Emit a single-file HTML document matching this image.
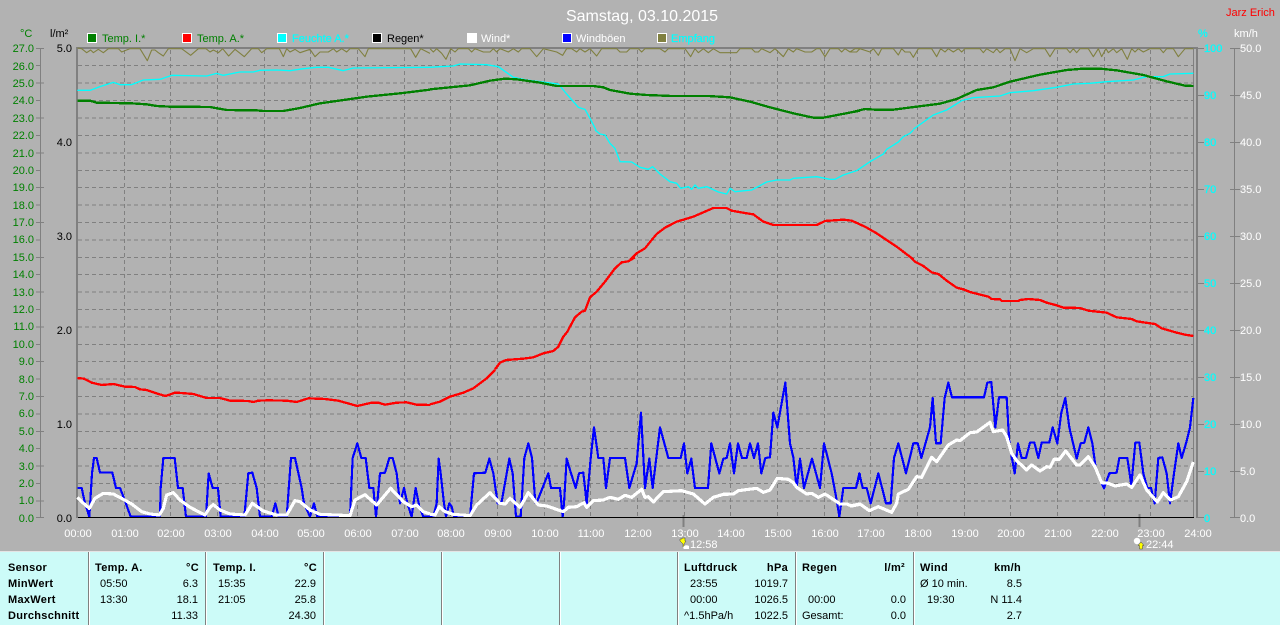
<!DOCTYPE html>
<html><head><meta charset="utf-8"><title>Samstag, 03.10.2015</title>
<style>
html,body{margin:0;padding:0;background:#b2b2b2;width:1280px;height:625px;overflow:hidden}
svg{position:absolute;left:0;top:0;display:block}
text{font-family:"Liberation Sans",sans-serif;font-size:11px}
.g text,.g{fill:#008000}
.c{fill:#00ffff}.w{fill:#fff}.k{fill:#000}
.b{font-weight:bold;letter-spacing:.3px;fill:#000}
.l{fill:none;shape-rendering:crispEdges;stroke-linejoin:round}
.r{text-anchor:end}
</style></head><body>
<svg width="1280" height="625" viewBox="0 0 1280 625" xmlns="http://www.w3.org/2000/svg">
<rect width="1280" height="625" fill="#b2b2b2"/>
<text x="642" y="21" text-anchor="middle" style="font-size:16px" fill="#ffffff">Samstag, 03.10.2015</text>
<text x="1226" y="16" fill="#ff0000">Jarz Erich</text>
<text x="20" y="37" class="g">°C</text><text x="50" y="37" class="k">l/m²</text>
<text x="1198" y="37" class="c" stroke="#00ffff" stroke-width=".2">%</text><text x="1234" y="37" class="w">km/h</text>
<!-- legend -->
<g stroke="#fff" stroke-width="1" shape-rendering="crispEdges">
<rect x="87.5" y="33.5" width="9" height="9" fill="#008000"/><rect x="182.5" y="33.5" width="9" height="9" fill="#ff0000"/><rect x="277.5" y="33.5" width="9" height="9" fill="#00ffff"/><rect x="372.5" y="33.5" width="9" height="9" fill="#000"/><rect x="467.5" y="33.5" width="9" height="9" fill="#fff"/><rect x="562.5" y="33.5" width="9" height="9" fill="#0000ff"/><rect x="657.5" y="33.5" width="9" height="9" fill="#808040"/>
</g>
<text x="102" y="42" fill="#008000">Temp. I.*</text><text x="197" y="42" fill="#008000">Temp. A.*</text><text x="292" y="42" class="c" stroke="#00ffff" stroke-width=".2">Feuchte A.*</text><text x="387" y="42" class="k">Regen*</text><text x="481" y="42" class="w">Wind*</text><text x="576" y="42" class="w">Windböen</text><text x="671" y="42" class="c" stroke="#00ffff" stroke-width=".2">Empfang</text>
<!-- grid -->
<g stroke="#808080" stroke-width="1" stroke-dasharray="4 3" shape-rendering="crispEdges" fill="none">
<path d="M78 65.5H1193M78 83H1193M78 100.5H1193M78 118H1193M78 135.5H1193M78 153H1193M78 170.5H1193M78 187.5H1193M78 205H1193M78 222.5H1193M78 240H1193M78 257.5H1193M78 274.5H1193M78 292H1193M78 309.5H1193M78 327H1193M78 344.5H1193M78 361.5H1193M78 379H1193M78 396.5H1193M78 414H1193M78 431.5H1193M78 448.5H1193M78 466H1193M78 483.5H1193M78 501H1193"/>
<path d="M124.5 50V518M170.5 50V518M217.5 50V518M264.5 50V518M310.5 50V518M357.5 50V518M404.5 50V518M450.5 50V518M497.5 50V518M544.5 50V518M590.5 50V518M637.5 50V518M684.5 50V518M730.5 50V518M777.5 50V518M824.5 50V518M870.5 50V518M917.5 50V518M964.5 50V518M1010.5 50V518M1057.5 50V518M1104.5 50V518M1150.5 50V518"/>
</g>
<!-- axes -->
<g stroke="#808080" shape-rendering="crispEdges" fill="none">
<path d="M40.5 48V518M1234.5 48V518" stroke-width="1"/>
<path d="M36 48.5H44M36 65.5H40M36 83H44M36 100.5H40M36 118H44M36 135.5H40M36 153H44M36 170.5H40M36 187.5H44M36 205H40M36 222.5H44M36 240H40M36 257.5H44M36 274.5H40M36 292H44M36 309.5H40M36 327H44M36 344.5H40M36 361.5H44M36 379H40M36 396.5H44M36 414H40M36 431.5H44M36 448.5H40M36 466H44M36 483.5H40M36 501H44M36 517.5H44" stroke-width="1"/>
<path d="M1197 48.5H1204M1197 95.5H1204M1197 142.5H1204M1197 189.5H1204M1197 236.5H1204M1197 283.5H1204M1197 330.5H1204M1197 377.5H1204M1197 424.5H1204M1197 471.5H1204M1197 517.5H1204" stroke-width="1"/>
<path d="M1230 48.5H1240M1230 95.5H1240M1230 142.5H1240M1230 189.5H1240M1230 236.5H1240M1230 283.5H1240M1230 330.5H1240M1230 377.5H1240M1230 424.5H1240M1230 471.5H1240M1230 517.5H1240" stroke-width="1"/>
<path d="M1193.5 48V518" stroke-width="1"/>
<path d="M76 48H1198" stroke-width="2"/>
<path d="M77 48V518M1197 48V518" stroke-width="2"/>
<path d="M683.5 515V527M1139.5 514V527" stroke-width="2"/>
</g>
<g class="r" fill="#008000">
<text x="34" y="52">27.0</text><text x="34" y="70">26.0</text><text x="34" y="87">25.0</text><text x="34" y="104">24.0</text><text x="34" y="122">23.0</text><text x="34" y="139">22.0</text><text x="34" y="157">21.0</text><text x="34" y="174">20.0</text><text x="34" y="191">19.0</text><text x="34" y="209">18.0</text><text x="34" y="226">17.0</text><text x="34" y="243">16.0</text><text x="34" y="261">15.0</text><text x="34" y="278">14.0</text><text x="34" y="296">13.0</text><text x="34" y="313">12.0</text><text x="34" y="330">11.0</text><text x="34" y="348">10.0</text><text x="34" y="365">9.0</text><text x="34" y="383">8.0</text><text x="34" y="400">7.0</text><text x="34" y="417">6.0</text><text x="34" y="435">5.0</text><text x="34" y="452">4.0</text><text x="34" y="470">3.0</text><text x="34" y="487">2.0</text><text x="34" y="504">1.0</text><text x="34" y="522">0.0</text>
</g>
<g class="r" fill="#000">
<text x="72" y="52">5.0</text><text x="72" y="146">4.0</text><text x="72" y="240">3.0</text><text x="72" y="334">2.0</text><text x="72" y="428">1.0</text><text x="72" y="522">0.0</text>
</g>
<g fill="#00ffff" stroke="#00ffff" stroke-width=".25">
<text x="1204" y="52">100</text><text x="1204" y="99">90</text><text x="1204" y="146">80</text><text x="1204" y="193">70</text><text x="1204" y="240">60</text><text x="1204" y="287">50</text><text x="1204" y="334">40</text><text x="1204" y="381">30</text><text x="1204" y="428">20</text><text x="1204" y="475">10</text><text x="1204" y="522">0</text>
</g>
<g fill="#ffffff">
<text x="1240" y="52">50.0</text><text x="1240" y="99">45.0</text><text x="1240" y="146">40.0</text><text x="1240" y="193">35.0</text><text x="1240" y="240">30.0</text><text x="1240" y="287">25.0</text><text x="1240" y="334">20.0</text><text x="1240" y="381">15.0</text><text x="1240" y="428">10.0</text><text x="1240" y="475">5.0</text><text x="1240" y="522">0.0</text>
</g>
<g fill="#ffffff" text-anchor="middle">
<text x="78" y="537">00:00</text><text x="125" y="537">01:00</text><text x="171" y="537">02:00</text><text x="218" y="537">03:00</text><text x="265" y="537">04:00</text><text x="311" y="537">05:00</text><text x="358" y="537">06:00</text><text x="405" y="537">07:00</text><text x="451" y="537">08:00</text><text x="498" y="537">09:00</text><text x="545" y="537">10:00</text><text x="591" y="537">11:00</text><text x="638" y="537">12:00</text><text x="685" y="537">13:00</text><text x="731" y="537">14:00</text><text x="778" y="537">15:00</text><text x="825" y="537">16:00</text><text x="871" y="537">17:00</text><text x="918" y="537">18:00</text><text x="965" y="537">19:00</text><text x="1011" y="537">20:00</text><text x="1058" y="537">21:00</text><text x="1105" y="537">22:00</text><text x="1151" y="537">23:00</text><text x="1198" y="537">24:00</text>
</g>
<text x="690" y="548" fill="#ffffff">12:58</text><text x="1146" y="548" fill="#ffffff">22:44</text>
<!-- sun/moon icons -->
<path d="M680 539h2v-1h3v3h1l-2 3v3h-1v-3l-3-3z" fill="#ffff00" stroke="#444" stroke-width=".5"/>
<path d="M684 549a3 2 0 0 1 5-3v3z" fill="#fff"/>
<circle cx="1137" cy="541" r="3.2" fill="#fff"/>
<path d="M1141 542l3 3.500h-1.500v3.500h-3v-3.500h-1.500z" fill="#ffff00" stroke="#444" stroke-width=".5"/>

<!-- olive: Empfang -->
<g class="l" stroke="#808040" style="shape-rendering:auto">
<polyline transform="scale(.33333)" stroke-width="3.300" points="232,144 245,146 260,158 272,150 280,158 295,148 310,158 325,146 355,146 365,156 390,146 420,146 442,182 455,150 465,150 475,158 490,168 505,146 545,146 572,166 595,146 618,146 630,156 640,150 655,158 668,146 686,168 705,148 733,170 755,146 775,146 785,158 800,146 838,146 850,170 860,146 870,156 885,148 900,158 930,148 945,170 960,156 985,156 1000,146 1010,156 1025,146 1040,156 1050,146 1075,146 1095,170 1105,146 1232,146 1247,172 1262,146 1290,160"/>
<polyline transform="translate(430,0) scale(.33333)" stroke-width="3.300" points="0,146 10,156 20,146 35,160 48,178 62,146 75,156 85,146 115,146 125,156 135,146 160,156 180,156 190,146 200,156 210,146 235,156 250,146 265,156 275,146 300,146 320,170 340,146 380,156 398,166 410,146 425,146 440,156 450,146 465,156 480,146 500,168 515,146 560,146 570,156 590,156 600,146 625,146 635,156 645,146 690,146 705,156 715,146 765,146 782,170 795,146 805,158 820,146 835,158 850,146 870,158 920,158 930,146 965,146 975,156 985,156 995,146 1020,158 1035,146 1060,170 1075,146 1090,156 1100,146 1125,156 1145,156 1160,146 1170,146 1185,170 1200,146 1225,146 1235,156 1245,146 1260,156 1275,146 1290,146"/>
<polyline transform="translate(850,0) scale(.33333)" stroke-width="3.300" points="0,156 20,156 30,146 60,156 70,146 85,166 95,146 130,146 145,165 155,146 165,156 180,156 190,172 205,146 245,146 260,170 272,146 285,156 295,146 310,156 325,146 335,156 345,146 390,146 400,158 410,146 430,158 440,146 450,158 465,146 480,146 495,182 510,146 530,158 550,146 585,146 600,170 615,146 650,146 660,158 670,146 680,158 690,146 715,146 730,170 745,146 755,170 768,146 775,158 790,146 800,158 815,146 832,178 845,146 855,156 865,146 880,156 900,146 930,146 940,158 950,146 970,146 985,170 1005,146 1030,146"/>
</g>
<!-- cyan: humidity -->
<g class="l" stroke="#00ffff" stroke-width="4" style="shape-rendering:auto">
<polyline transform="scale(.33333)" points="232,271 270,271 300,260 340,247 360,254 395,254 430,240 480,238 515,226 620,228 650,220 670,226 720,216 760,216 780,211 830,210 870,212 910,206 950,202 985,202 1030,212 1060,204 1290,202"/>
<polyline transform="translate(430,0) scale(.33333)" points="0,202 30,200 70,198 90,192 170,194 205,200 250,232 290,240 330,245 385,252 410,282 445,322 465,328 480,355 498,390"/>
<polyline transform="translate(550,130) scale(.33333)" points="135,0 150,12 165,15 180,40 195,55 210,95 245,96 270,112 295,118 308,110 330,132 360,155 380,160 392,175 415,170 425,178 435,165 445,175 470,170 505,186 530,192 540,175 555,185 605,180 650,156 680,150 720,150 730,145 800,140 840,148 855,148 880,135 920,122 960,95 1000,72 1010,58 1045,36 1060,20 1080,10 1090,0"/>
<polyline transform="translate(850,0) scale(.33333)" points="190,388 250,345 290,330 335,302 370,293 450,288 480,278 550,272 620,262 670,252 720,250 770,245 850,240 890,230 940,230 960,222 1030,220"/>
</g>
<!-- green: Temp I -->
<g class="l" stroke="#008000" stroke-width="7">
<polyline transform="scale(.33333)" points="232,302 270,302 290,308 395,310 440,313 470,318 510,320 630,321 680,330 770,331 790,333 850,333 900,324 960,310 1030,300 1100,290 1200,280 1290,269"/>
<polyline transform="translate(430,0) scale(.33333)" points="0,268 60,262 120,256 180,242 225,236 260,238 330,248 380,258 490,258 520,262 540,270 600,281 650,285 725,288 835,288 900,292 960,305 1020,322 1090,340 1150,353 1180,353 1290,332"/>
<polyline transform="translate(850,0) scale(.33333)" points="0,338 45,327 75,329 130,329 200,320 270,311 320,297 380,270 430,262 480,245 570,224 650,210 700,206 750,206 800,211 880,225 950,244 1005,257 1030,258"/>
</g>
<!-- red: Temp A -->
<g class="l" stroke="#ff0000" stroke-width="7">
<polyline transform="translate(0,370) scale(.33333)" points="232,24 252,26 275,38 305,45 340,42 375,50 405,51 420,58 440,60 475,72 497,78 525,68 545,69 580,72 620,84 660,84 690,92 745,93 760,96 775,92 805,91 860,92 890,96 925,85 975,87 1015,92 1072,108 1115,98 1135,98 1155,104 1190,98 1220,97 1250,104 1290,105"/>
<polyline transform="translate(430,370) scale(.33333)" points="0,103 30,95 60,80 100,68 130,55 170,25 195,0"/>
<polyline transform="translate(480,240) scale(.33333)" points="45,388 60,368 78,360 130,356 160,352 190,340 220,333 235,320 250,290 262,275 285,232 305,215 315,212 330,172 350,155 375,125 405,85 425,67 445,64 465,52"/>
<polyline transform="translate(550,130) scale(.33333)" points="240,390 260,370 285,355 305,330 320,312 345,293 380,275 430,260 490,234 530,234 545,242 590,250 610,253 640,275 670,285 800,285 825,273 880,269 905,272 945,290 980,310 1040,350 1090,388"/>
<polyline transform="translate(900,240) scale(.33333)" points="25,45 45,65 70,78 95,97 115,102 140,122 170,143 190,148 210,156 265,170 275,177 300,178 305,183 355,183 360,180 385,177 420,180 440,188 470,196 490,203 540,204 565,212 620,218 650,232 695,237 710,244 765,252 785,265 830,278 855,284 880,288"/>
</g>
<!-- blue: gusts -->
<g class="l" stroke="#0000ff" stroke-width="6.5">
<polyline transform="translate(0,370) scale(.33333)" points="232,354 245,354 255,400 268,440 276,310 282,264 290,264 300,308 337,308 348,354 360,354 372,385 392,440 480,440 482,354 490,264 524,264 534,354 548,354 558,440 618,440 626,310 638,354 654,354 662,440 733,440 745,310 757,308 770,354 780,440 815,440 826,400 836,440 860,440 873,264 885,264 905,354 912,400 930,440 942,400 952,440 1050,440 1058,264 1072,220 1084,264 1097,264 1108,354 1120,354 1128,440 1140,310 1155,308 1168,264 1178,264 1190,310 1200,400 1212,354 1222,400 1235,440 1247,354 1258,410 1270,440 1290,440"/>
<polyline transform="translate(430,370) scale(.33333)" points="0,440 10,440 20,400 26,266 32,310 42,400 48,440 58,400 65,410 72,440 120,440 132,310 166,308 178,266 190,310 203,400 215,395 238,266 248,310 258,440 272,440 283,264 295,220 306,264 316,398 320,398 355,310 363,354 390,354 398,440 402,400 410,266 420,300 437,354 447,310 460,308 470,400 482,266 492,172 505,264 520,264 528,354 540,264 585,264 598,354 620,280 633,128 645,354 658,266 668,354 690,172 715,264 752,264 762,220 772,310 784,266 795,354 834,354 844,220 868,310 880,266 890,264 900,220 912,310 924,220 936,264 950,264 960,220 972,264 984,220 994,310 1006,264 1020,262 1030,128 1042,172 1066,38 1080,220 1090,262 1100,354 1110,266 1122,354 1146,266 1170,354 1182,220 1205,310 1220,390 1228,440 1240,354 1278,354 1290,310"/>
<polyline transform="translate(850,370) scale(.33333)" points="0,354 18,354 28,310 38,354 50,354 62,400 85,310 108,400 122,400 132,264 145,220 168,310 190,220 203,220 214,264 240,172 248,84 258,220 272,220 284,84 295,38 306,82 402,82 412,38 424,36 436,172 447,82 470,82 478,220 494,310 504,220 515,264 528,264 540,218 553,218 565,264 575,218 598,218 608,172 622,220 634,128 646,84 658,172 680,266 692,220 703,218 715,172 727,220 738,300 762,355 778,310 800,308 808,264 832,264 844,345 856,218 868,218 880,310 892,354 903,354 914,400 925,264 937,262 950,310 960,400 972,310 985,220 995,264 1008,220 1020,172 1030,84"/>
</g>
<path d="M78 517.500H1194" stroke="#000" stroke-width="1" shape-rendering="crispEdges"/>
<!-- white: wind -->
<g class="l" stroke="#ffffff" stroke-width="9.500">
<polyline transform="translate(0,370) scale(.33333)" points="232,382 245,395 268,415 285,385 310,370 340,372 370,388 395,402 425,425 450,432 478,435 490,415 500,375 520,368 540,390 570,412 615,435 630,412 640,404 660,420 690,432 735,435 757,400 790,423 830,435 860,435 885,392 900,395 930,420 960,433 1050,437 1065,390 1095,374 1130,405 1155,375 1172,355 1210,395 1235,410 1250,405 1270,425 1290,432"/>
<polyline transform="translate(430,370) scale(.33333)" points="0,433 15,435 28,410 45,425 70,433 120,437 140,405 180,368 210,400 225,402 240,385 270,412 295,368 325,405 350,408 400,425 415,412 440,410 462,398 470,412 490,392 520,390 540,382 565,388 585,376 605,382 635,358 645,382 655,380 670,396 700,365 755,362 790,372 825,402 850,382 880,373 910,372 925,362 980,355 1000,367 1020,360 1042,325 1075,328 1090,338 1100,352 1130,372 1145,370 1165,382 1185,372 1205,385 1230,402 1250,402 1265,408 1290,403"/>
<polyline transform="translate(850,370) scale(.33333)" points="0,408 30,402 58,422 85,410 125,427 140,400 145,372 175,358 200,320 215,322 245,262 260,275 295,225 320,210 330,212 360,188 380,186 420,157 430,185 458,180 470,200 485,250 500,272 530,300 545,285 570,303 590,290 600,292 612,268 628,268 647,243 680,285 690,285 715,260 735,290 755,338 775,340 795,348 830,342 845,352 870,315 890,360 922,396 940,368 962,390 985,380 1010,335 1030,276"/>
</g>

<!-- table -->
<rect x="0" y="552" width="1280" height="73" fill="#ccfbf8"/>
<path d="M0 551.500H1280" stroke="#e4e4e4" shape-rendering="crispEdges"/>
<g stroke="#808080" shape-rendering="crispEdges"><path d="M88.500 552V625M205.500 552V625M323.500 552V625M441.500 552V625M559.500 552V625M677.500 552V625M795.500 552V625M913.500 552V625"/></g>
<g stroke="#fff" shape-rendering="crispEdges"><path d="M89.500 552V625M206.500 552V625M324.500 552V625M442.500 552V625M560.500 552V625M678.500 552V625M796.500 552V625M914.500 552V625"/></g>
<g class="k">
<text x="8" y="571" class="b">Sensor</text><text x="8" y="587" class="b">MinWert</text><text x="8" y="603" class="b">MaxWert</text><text x="8" y="619" class="b">Durchschnitt</text>
<text x="95" y="571" class="b">Temp. A.</text><text x="199" y="571" class="b r">°C</text>
<text x="100" y="587">05:50</text><text x="198" y="587" class="r">6.3</text>
<text x="100" y="603">13:30</text><text x="198" y="603" class="r">18.1</text>
<text x="198" y="619" class="r">11.33</text>
<text x="213" y="571" class="b">Temp. I.</text><text x="317" y="571" class="b r">°C</text>
<text x="218" y="587">15:35</text><text x="316" y="587" class="r">22.9</text>
<text x="218" y="603">21:05</text><text x="316" y="603" class="r">25.8</text>
<text x="316" y="619" class="r">24.30</text>
<text x="684" y="571" class="b">Luftdruck</text><text x="788" y="571" class="b r">hPa</text>
<text x="690" y="587">23:55</text><text x="788" y="587" class="r">1019.7</text>
<text x="690" y="603">00:00</text><text x="788" y="603" class="r">1026.5</text>
<text x="684" y="619">^1.5hPa/h</text><text x="788" y="619" class="r">1022.5</text>
<text x="802" y="571" class="b">Regen</text><text x="905" y="571" class="b r">l/m²</text>
<text x="808" y="603">00:00</text><text x="906" y="603" class="r">0.0</text>
<text x="802" y="619">Gesamt:</text><text x="906" y="619" class="r">0.0</text>
<text x="920" y="571" class="b">Wind</text><text x="1021" y="571" class="b r">km/h</text>
<text x="920" y="587">Ø 10 min.</text><text x="1022" y="587" class="r">8.5</text>
<text x="927" y="603">19:30</text><text x="1022" y="603" class="r">N 11.4</text>
<text x="1022" y="619" class="r">2.7</text>
</g>
</svg>
</body></html>
